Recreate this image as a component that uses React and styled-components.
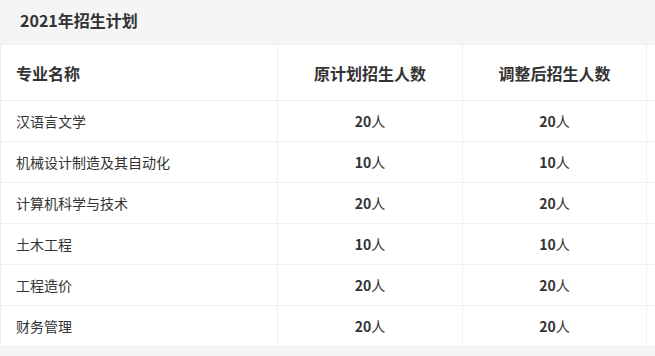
import React from "react";
import styled, { createGlobalStyle } from "styled-components";

const Global = createGlobalStyle`
  html, body { margin: 0; padding: 0; background: #f5f5f5; overflow: hidden; }
  body { font-family: "Noto Sans CJK SC", "Noto Sans", sans-serif; color: #333; }
`;

const Page = styled.div`
  width: 655px;
  height: 356px;
  background: #f5f5f5;
  overflow: hidden;
`;

const Title = styled.h2`
  margin: 0;
  height: 44px;
  padding: 0 0 4px 20px;
  box-sizing: border-box;
  display: flex;
  align-items: center;
  font-size: 16px;
  font-weight: 700;
  color: #333;
`;

const Table = styled.table`
  width: 831px;
  table-layout: fixed;
  border-collapse: collapse;
  background: #fff;
  border: 1px solid #efefef;
`;

const HeadCell = styled.th`
  height: 55px;
  padding: 0 ${(p) => (p.$left ? "15px" : "0")};
  border: 1px solid #efefef;
  font-size: 16px;
  font-weight: 700;
  color: #333;
  text-align: ${(p) => (p.$left ? "left" : "center")};
`;

const Cell = styled.td`
  height: 40px;
  padding: 0 ${(p) => (p.$left ? "15px" : "0")};
  border: 1px solid #efefef;
  font-size: 14px;
  color: #333;
  text-align: ${(p) => (p.$left ? "left" : "center")};
  white-space: nowrap;
`;

const Num = styled.b`
  font-weight: 700;
`;

const rows = [
  ["汉语言文学", 20, 20],
  ["机械设计制造及其自动化", 10, 10],
  ["计算机科学与技术", 20, 20],
  ["土木工程", 10, 10],
  ["工程造价", 20, 20],
  ["财务管理", 20, 20],
];

export default function App() {
  return (
    <Page>
      <Global />
      <Title>2021年招生计划</Title>
      <Table>
        <colgroup>
          <col style={{ width: 277 }} />
          <col style={{ width: 185 }} />
          <col style={{ width: 184 }} />
          <col style={{ width: 184 }} />
        </colgroup>
        <thead>
          <tr>
            <HeadCell $left>专业名称</HeadCell>
            <HeadCell>原计划招生人数</HeadCell>
            <HeadCell>调整后招生人数</HeadCell>
            <HeadCell />
          </tr>
        </thead>
        <tbody>
          {rows.map(([name, a, b]) => (
            <tr key={name}>
              <Cell $left>{name}</Cell>
              <Cell>
                <Num>{a}</Num>人
              </Cell>
              <Cell>
                <Num>{b}</Num>人
              </Cell>
              <Cell />
            </tr>
          ))}
        </tbody>
      </Table>
    </Page>
  );
}
